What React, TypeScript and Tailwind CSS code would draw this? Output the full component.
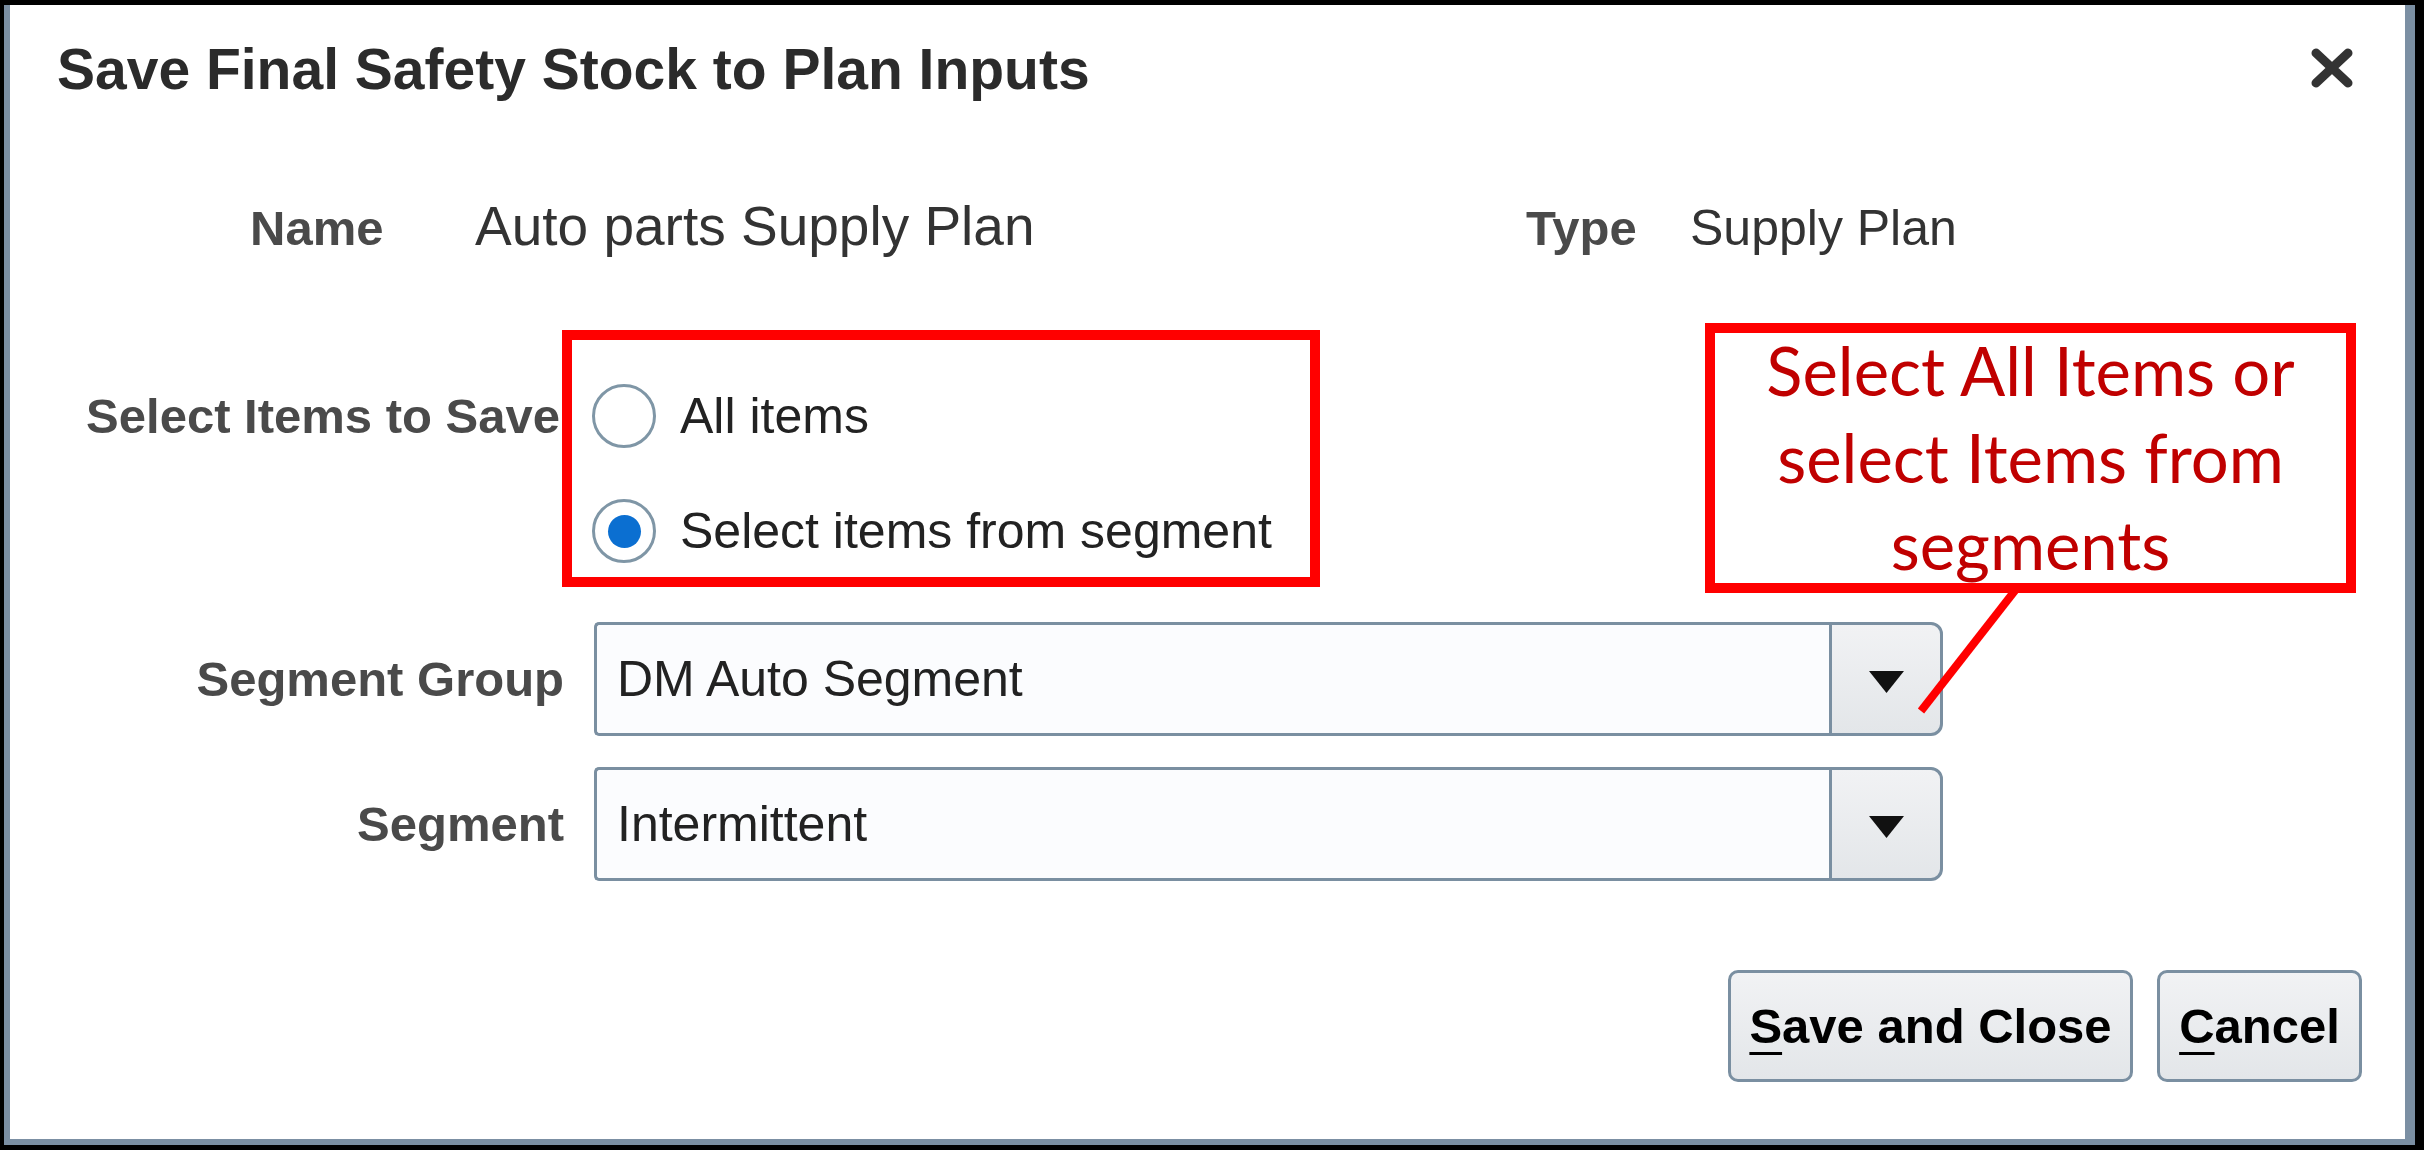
import React from 'react';

// Save Final Safety Stock dialog, with the red callout annotations on top

const Triangle: React.FC = () => (
  <svg width="37" height="24" viewBox="0 0 37 24">
    <polygon points="1,1 36,1 18.5,23" fill="#111" />
  </svg>
);

const CloseIcon: React.FC = () => (
  <svg width="44" height="40" viewBox="0 0 44 40">
    <path d="M6 5 L38 35 M38 5 L6 35" stroke="#333" strokeWidth="9" strokeLinecap="round" />
  </svg>
);

const Radio: React.FC<{ checked?: boolean; label: string }> = ({ checked = false, label }) => (
  <div className="flex items-center gap-[24px]">
    <div className="flex h-[64px] w-[64px] items-center justify-center rounded-full border-[3px] border-[#7f96a6] bg-white">
      {checked && <div className="h-[33px] w-[33px] rounded-full bg-[#0b6fd1]" />}
    </div>
    <span className="text-[50px] leading-none text-[#222]">{label}</span>
  </div>
);

const SelectField: React.FC<{ label: string; value: string; className?: string }> = ({ label, value, className = '' }) => (
  <div className={`flex items-center ${className}`}>
    <div className="w-[554px] text-right text-[49px] font-bold leading-none text-[#4a4a4a]">{label}</div>
    <div className="ml-[30px] flex h-[114px]">
      <div className="flex w-[1235px] items-center rounded-l-[5px] border-y-[3px] border-l-[3px] border-[#7a8fa1] bg-[#fbfcfe] pl-[20px] text-[50px] leading-none text-[#222]">
        {value}
      </div>
      <div className="flex w-[114px] items-center justify-center rounded-r-[12px] border-[3px] border-[#7a8fa1] bg-gradient-to-b from-[#f1f2f4] to-[#e3e6e9] pt-[6px]">
        <Triangle />
      </div>
    </div>
  </div>
);

const DialogButton: React.FC<{ first: string; rest: string; width: string }> = ({ first, rest, width }) => (
  <button
    className={`flex h-[112px] ${width} items-center justify-center rounded-[10px] border-[3px] border-[#7a8fa1] bg-gradient-to-b from-[#f1f2f4] to-[#e3e6e9] text-[49px] font-bold leading-none text-black`}
  >
    <span className="underline decoration-[3px] underline-offset-[9px]">{first}</span>
    {rest}
  </button>
);

export default function App() {
  return (
    <div className="relative h-[1150px] w-[2424px] border-b-[5px] border-l-[4px] border-r-[9px] border-t-[5px] border-black bg-black font-['Liberation_Sans',Arial,sans-serif]">
      <div className="h-full w-full border-b-[6px] border-l-[6px] border-r-[10px] border-[#7b8fa3] bg-white">
        {/* header */}
        <div className="flex items-start justify-between pl-[47px] pr-[51px] pt-[36px]">
          <h1 className="text-[57px] font-bold leading-none text-[#2b2b2b]">Save Final Safety Stock to Plan Inputs</h1>
          <div className="mt-[7px]">
            <CloseIcon />
          </div>
        </div>

        {/* name / type */}
        <div className="mt-[101px] flex items-baseline pl-[240px]">
          <div className="w-[225px] text-[49px] font-bold leading-none text-[#4a4a4a]">Name</div>
          <div className="w-[1051px] text-[55px] leading-none text-[#333]">Auto parts Supply Plan</div>
          <div className="w-[164px] text-[49px] font-bold leading-none text-[#4a4a4a]">Type</div>
          <div className="text-[50px] leading-none text-[#333]">Supply Plan</div>
        </div>

        {/* items to save */}
        <div className="mt-[76px] flex items-start">
          <div className="mt-[62px] w-[552px] pr-[2px] text-right text-[49px] font-bold leading-none text-[#4a4a4a]">
            Select Items to Save
          </div>
          <div className="h-[257px] w-[758px] border-[10px] border-[#ff0000] pl-[20px] pt-[44px]">
            <div className="flex flex-col gap-[51px]">
              <Radio label="All items" />
              <Radio checked label="Select items from segment" />
            </div>
          </div>
        </div>

        <SelectField className="mt-[35px]" label="Segment Group" value="DM Auto Segment" />
        <SelectField className="mt-[31px]" label="Segment" value="Intermittent" />

        {/* buttons */}
        <div className="mt-[89px] flex justify-end gap-[24px] pr-[43px]">
          <DialogButton first="S" rest="ave and Close" width="w-[405px]" />
          <DialogButton first="C" rest="ancel" width="w-[205px]" />
        </div>
      </div>

      {/* callout annotation */}
      <div className="absolute left-[1701px] top-[318px] h-[270px] w-[651px] border-[10px] border-[#ff0000] bg-white">
        <p className="-mt-[6px] text-center font-['Lato',sans-serif] text-[67px] leading-[87px] text-[#c00000]">
          Select All Items or
          <br />
          select Items from
          <br />
          segments
        </p>
      </div>
      <svg className="pointer-events-none absolute left-0 top-0" width="2424" height="1150">
        <line x1="2013" y1="583" x2="1917" y2="706" stroke="#ff0000" strokeWidth="8" />
      </svg>
    </div>
  );
}
